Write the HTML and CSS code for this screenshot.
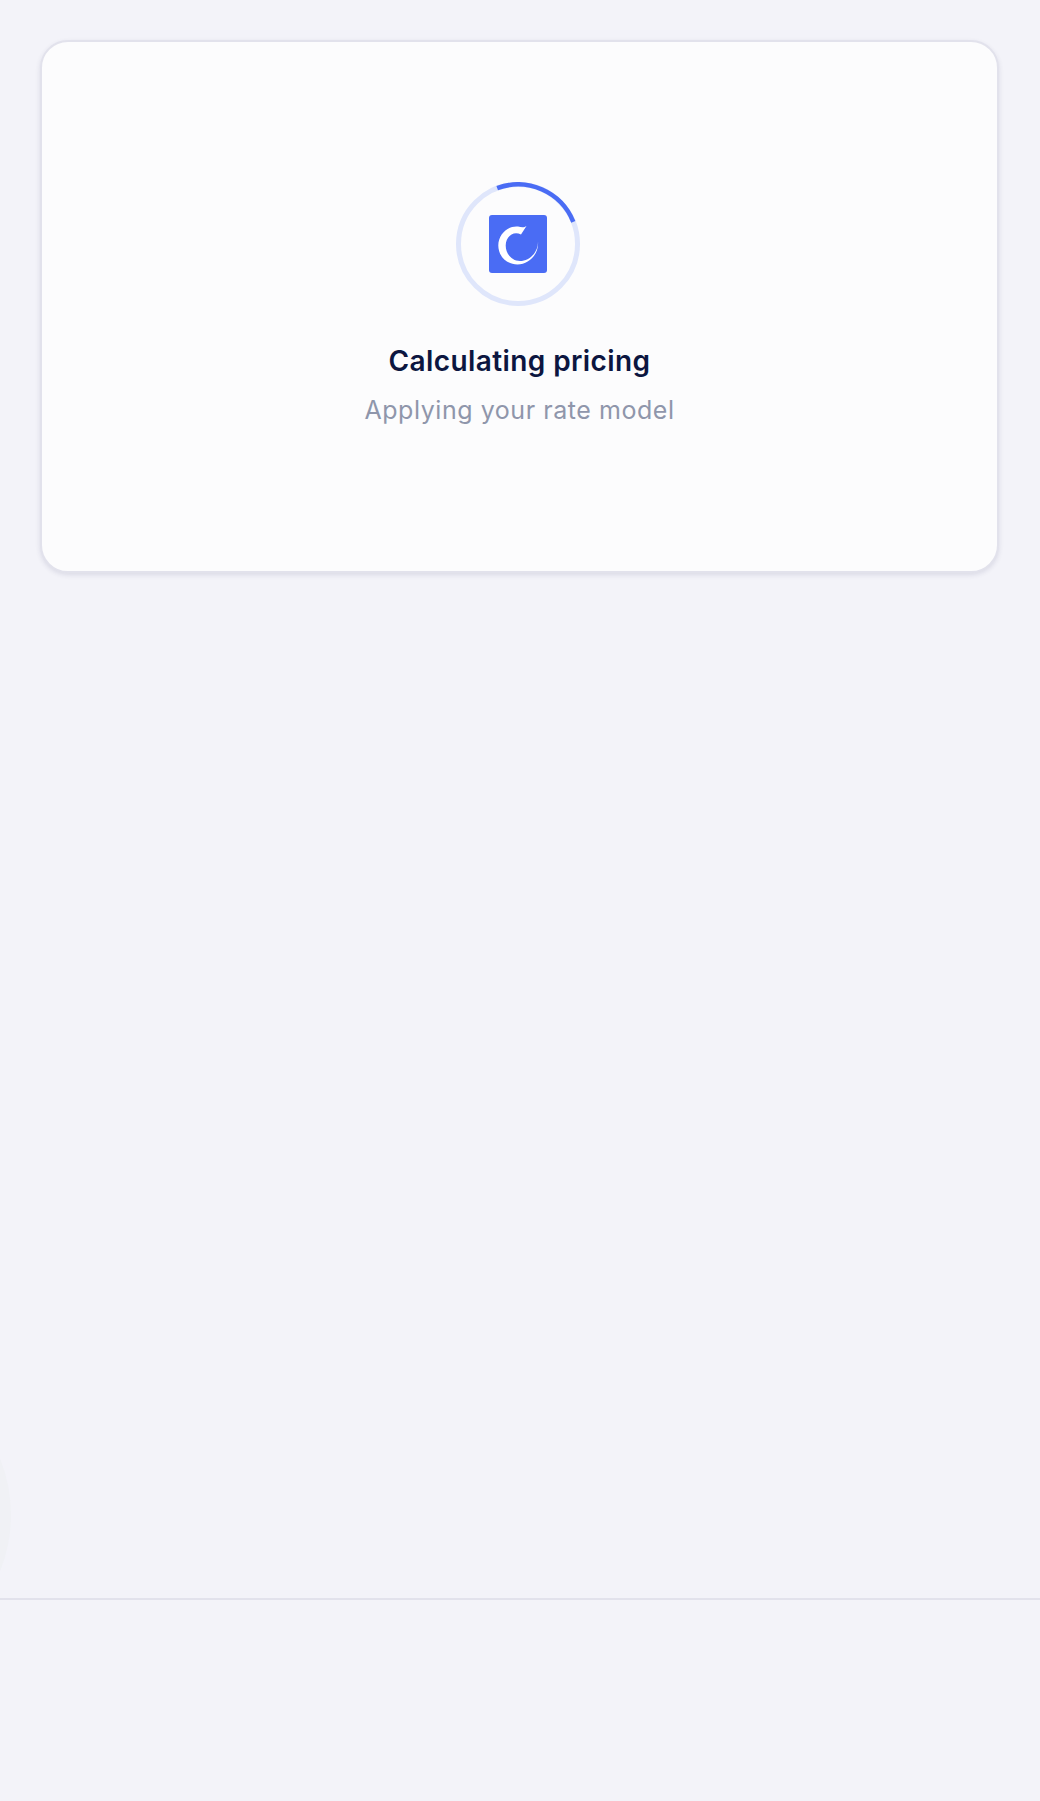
FILE: index.html
```html
<!DOCTYPE html>
<html lang="en">

<head>
    <meta charset="utf-8">
    <meta name="viewport" content="width=device-width, initial-scale=1">
    <title>Calculating pricing</title>
    <link rel="stylesheet" href="styles.css">
</head>

<body>
    <div class="page">
        <main class="content">
            <section class="card">
                <div class="spinner">
                    <svg class="spinner_ring" viewBox="0 0 124 124" width="124" height="124">
                        <circle cx="62" cy="62" r="59.5" fill="none" stroke="#dfe6fb" stroke-width="5"/>
                        <path d="M 41.2 6.2 A 59.5 59.5 0 0 1 117.3 39.8" fill="none" stroke="#4a6cf4" stroke-width="4.5"/>
                    </svg>
                    <div class="spinner_logo">
                        <svg viewBox="0 0 58 58" width="58" height="58">
                            <path fill="#fff" d="M 37.5 11 L 32 19.5 C 24 15.5 16.7 22 16.7 30.5 C 16.7 39 23 46 31 46 C 40 46 49 38 49 26.7 C 50 39 40 49.5 28.5 49.5 C 17.5 49.5 9.3 41 9.3 30.5 C 9.3 19 19 10.5 29 11.5 C 32 12.3 35 13 37.5 11 Z"/>
                        </svg>
                    </div>
                </div>
                <h1 class="card_title">Calculating pricing</h1>
                <p class="card_text">Applying your rate model</p>
            </section>
        </main>
        <div class="blob"></div>
        <footer class="bottom"></footer>
    </div>
</body>

</html>
```
FILE: styles.css
```css
* {
    box-sizing: border-box;
}
html, body {
    margin: 0;
    padding: 0;
}
body {
    background-color: #f3f3f9;
    font-family: Inter, "Liberation Sans", sans-serif;
}
.page {
    position: relative;
    display: flex;
    flex-direction: column;
    height: 1801px;
    overflow: hidden;
}
.content {
    flex: 1;
    padding: 40px 41px 0 40px;
}
.card {
    display: flex;
    flex-direction: column;
    align-items: center;
    height: 533px;
    padding-top: 140px;
    background-color: #fcfcfd;
    border: 2px solid #e2e2ec;
    border-radius: 28px;
    box-shadow: 0 2px 5px rgba(40, 45, 90, 0.12);
}
.spinner {
    position: relative;
    display: flex;
    align-items: center;
    justify-content: center;
    width: 124px;
    height: 124px;
    margin-right: 3px;
}
.spinner_ring {
    position: absolute;
    top: 0;
    left: 0;
}
.spinner_logo {
    width: 58px;
    height: 58px;
    background-color: #4a6cf4;
    border-radius: 3px;
}
.spinner_logo svg {
    display: block;
}
.card_title {
    margin: 37px 0 0;
    color: #0c1640;
    font-size: 28px;
    font-weight: 600;
    letter-spacing: 0.4px;
    line-height: 36px;
}
.card_text {
    margin: 14px 0 0;
    color: #8f96ab;
    font-size: 25px;
    font-weight: 400;
    letter-spacing: 0.55px;
    line-height: 34px;
}
.blob {
    position: absolute;
    left: -289px;
    top: 1365px;
    width: 300px;
    height: 300px;
    background-color: #f0f1f5;
    border-radius: 50%;
}
.bottom {
    height: 203px;
    border-top: 2px solid #e2e2ec;
}
```
